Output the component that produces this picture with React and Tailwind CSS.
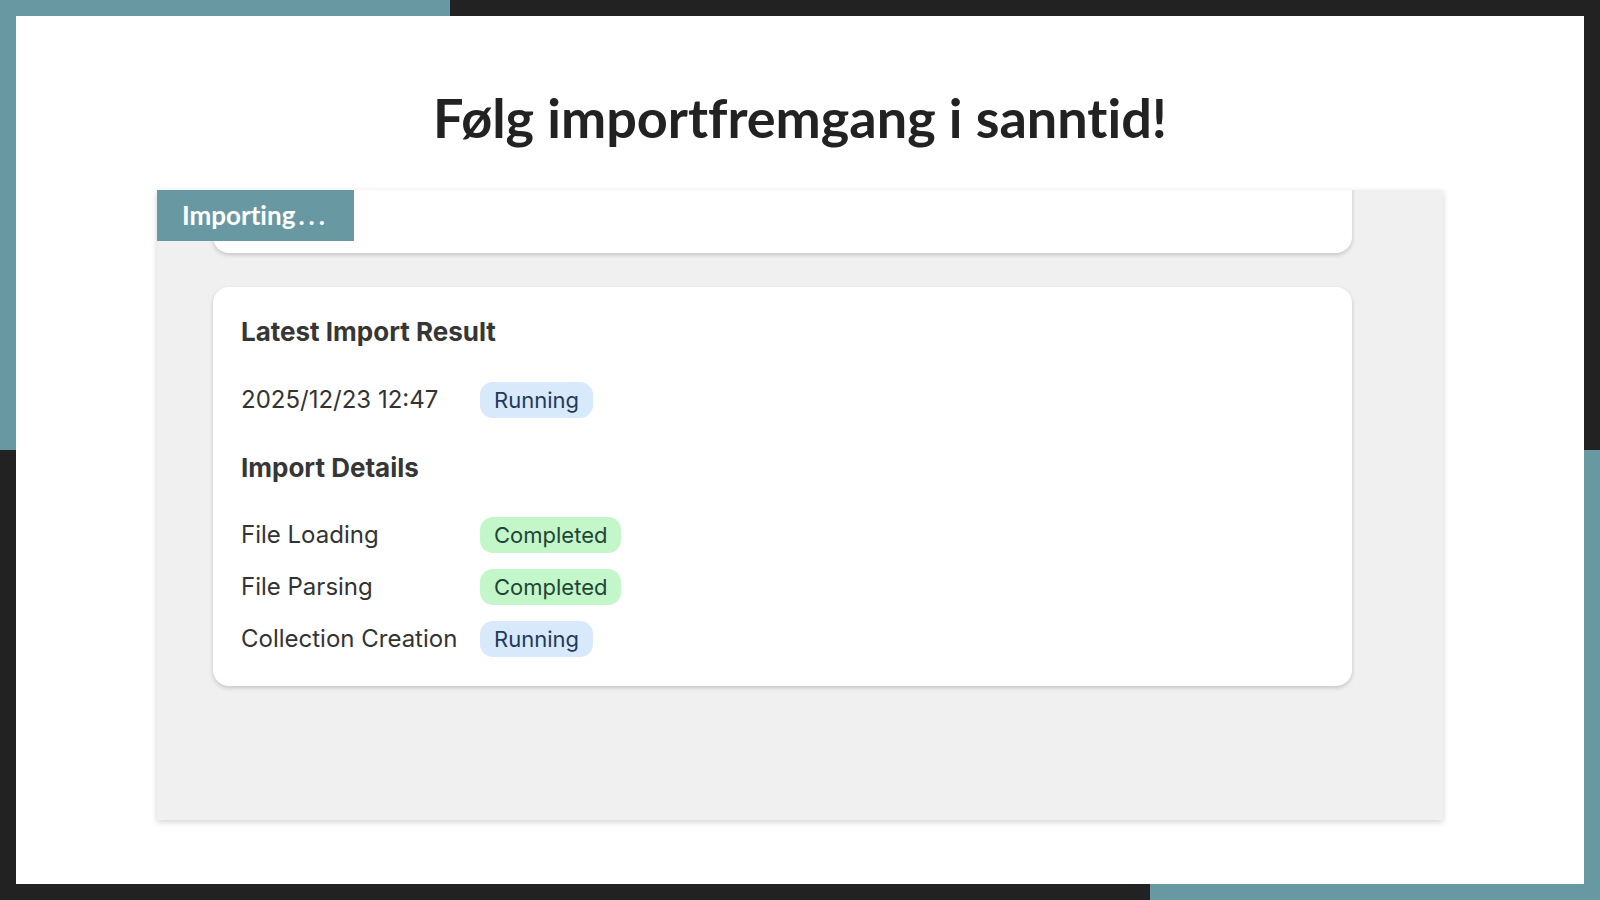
import React from "react";

function Badge({ kind, children }) {
  const cls =
    kind === "green"
      ? "bg-[#c3f6c9] text-[#1e4636]"
      : "bg-[#d8e9fb] text-[#1f3a5c]";
  return (
    <span
      className={`inline-flex items-center h-[36px] px-[14px] rounded-[13px] text-[22px] leading-none ${cls}`}
    >
      {children}
    </span>
  );
}

function Row({ label, kind, status }) {
  return (
    <div className="flex items-center h-[36px]">
      <div className="w-[239px] text-[24px] text-[#333333]">{label}</div>
      <Badge kind={kind}>{status}</Badge>
    </div>
  );
}

export default function App() {
  return (
    <div className="w-[1600px] h-[900px] flex flex-col bg-white overflow-hidden">
      <div className="flex h-[16px]">
        <div className="w-[450px] bg-[#6899a3]" />
        <div className="flex-1 bg-[#222222]" />
      </div>
      <div className="flex flex-1">
        <div className="w-[16px] flex flex-col">
          <div className="h-[434px] bg-[#6899a3]" />
          <div className="flex-1 bg-[#222222]" />
        </div>
        <div className="flex-1 bg-white flex flex-col items-center">
          <h1
            className="mt-[74px] h-[56px] flex items-center text-[54px] font-bold text-[#222222] leading-none [font-variant-ligatures:none]"
            style={{ fontFamily: "Lato, 'Open Sans', sans-serif" }}
          >
            Følg importfremgang i sanntid!
          </h1>
          <div className="mt-[44px] relative w-[1286px] h-[630px] bg-[#f0f0f0] shadow-[0_2px_6px_rgba(0,0,0,0.18)] overflow-hidden">
            <div
              className="pl-[56px] pr-[91px] flex flex-col gap-[34px]"
              style={{ fontFamily: "Inter, 'Noto Sans', sans-serif" }}
            >
              <div className="-mt-[40px] h-[103px] bg-white rounded-[16px] shadow-[0_2px_4px_rgba(0,0,0,0.18)]" />
              <div className="bg-white rounded-[16px] shadow-[0_2px_4px_rgba(0,0,0,0.18)] pl-[28px] pt-[29px] pb-[28px] h-[399px]">
                <div className="text-[26px] font-bold text-[#363636] leading-[32px]">
                  Latest Import Result
                </div>
                <div className="mt-[34px] flex items-center h-[36px]">
                  <div className="w-[239px] text-[24px] text-[#333333]">
                    2025/12/23 12:47
                  </div>
                  <Badge kind="blue">Running</Badge>
                </div>
                <div className="mt-[34px] text-[26px] font-bold text-[#363636] leading-[32px]">
                  Import Details
                </div>
                <div className="mt-[33px] flex flex-col gap-[16px]">
                  <Row label="File Loading" kind="green" status="Completed" />
                  <Row label="File Parsing" kind="green" status="Completed" />
                  <Row label="Collection Creation" kind="blue" status="Running" />
                </div>
              </div>
            </div>
            <div
              className="absolute left-0 top-0 w-[197px] h-[51px] bg-[#6899a3] text-white font-bold text-[26px] flex items-center pl-[25px] [font-variant-ligatures:none]"
              style={{ fontFamily: "Lato, 'Open Sans', sans-serif" }}
            >
              Importing<span className="tracking-[4px] ml-[3px]">...</span>
            </div>
          </div>
        </div>
        <div className="w-[16px] flex flex-col">
          <div className="h-[434px] bg-[#222222]" />
          <div className="flex-1 bg-[#6899a3]" />
        </div>
      </div>
      <div className="flex h-[16px]">
        <div className="w-[1150px] bg-[#222222]" />
        <div className="flex-1 bg-[#6899a3]" />
      </div>
    </div>
  );
}
